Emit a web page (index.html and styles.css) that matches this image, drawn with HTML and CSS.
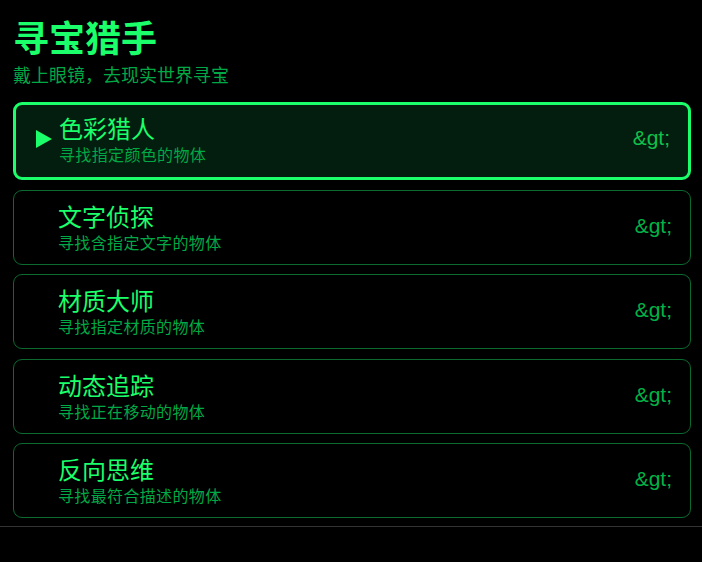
FILE: index.html
```html
<!DOCTYPE html>
<html lang="zh-CN">
<head>
<meta charset="utf-8">
<title>寻宝猎手</title>
<link rel="stylesheet" href="styles.css">
</head>
<body>
<div class="app">
  <header class="header">
    <h1 class="title">寻宝猎手</h1>
    <p class="subtitle">戴上眼镜，去现实世界寻宝</p>
  </header>
  <ul class="list">
    <li class="card selected">
      <span class="marker"><svg class="arrow" width="16" height="18" viewBox="0 0 16 18"><polygon points="0,0 16,9 0,18" fill="#1aff6a"/></svg></span>
      <div class="info">
        <div class="name">色彩猎人</div>
        <div class="desc">寻找指定颜色的物体</div>
      </div>
      <span class="chev">&amp;gt;</span>
    </li>
    <li class="card">
      <span class="marker"></span>
      <div class="info">
        <div class="name">文字侦探</div>
        <div class="desc">寻找含指定文字的物体</div>
      </div>
      <span class="chev">&amp;gt;</span>
    </li>
    <li class="card">
      <span class="marker"></span>
      <div class="info">
        <div class="name">材质大师</div>
        <div class="desc">寻找指定材质的物体</div>
      </div>
      <span class="chev">&amp;gt;</span>
    </li>
    <li class="card">
      <span class="marker"></span>
      <div class="info">
        <div class="name">动态追踪</div>
        <div class="desc">寻找正在移动的物体</div>
      </div>
      <span class="chev">&amp;gt;</span>
    </li>
    <li class="card">
      <span class="marker"></span>
      <div class="info">
        <div class="name">反向思维</div>
        <div class="desc">寻找最符合描述的物体</div>
      </div>
      <span class="chev">&amp;gt;</span>
    </li>
  </ul>
  <footer class="footer"></footer>
</div>
</body>
</html>
```

FILE: styles.css
```css
html, body {
  margin: 0;
  padding: 0;
  background: #000;
}
body {
  width: 702px;
  height: 562px;
  overflow: hidden;
  font-family: "Noto Sans CJK SC", "Noto Sans", sans-serif;
}
.app {
  padding-top: 14px;
}
.header {
  padding: 0 11px 0 13px;
}
.title {
  margin: 0;
  font-size: 36px;
  line-height: 44px;
  font-weight: 700;
  color: #1aff6a;
}
.subtitle {
  margin: 4px 0 0;
  font-size: 18px;
  line-height: 24px;
  color: #00a846;
}
.list {
  list-style: none;
  margin: 16px 11px 0 13px;
  padding: 0;
  display: flex;
  flex-direction: column;
  gap: 9.5px;
}
.card {
  display: flex;
  align-items: center;
  border: 1px solid #0b6a2e;
  border-radius: 9px;
  padding: 9px 18px 12px 16px;
}
.card.selected {
  border: 3px solid #1aff6a;
  background: #031d0e;
  padding: 7px 18px 13px 15px;
}
.marker {
  flex: 0 0 28px;
  display: flex;
  align-items: center;
}
.arrow {
  display: block;
  margin-left: 5px;
  margin-top: 1px;
}
.info {
  flex: 1;
  min-width: 0;
}
.name {
  font-size: 24px;
  line-height: 32px;
  color: #1aff6a;
}
.desc {
  font-size: 16px;
  line-height: 20px;
  letter-spacing: 0.35px;
  color: #00a846;
}
.chev {
  font-family: "Liberation Sans", Arial, sans-serif;
  font-size: 21px;
  color: #00b347;
}
.selected .chev {
  color: #10c04c;
}
.footer {
  margin-top: 8px;
  border-top: 1px solid #333;
}
```
